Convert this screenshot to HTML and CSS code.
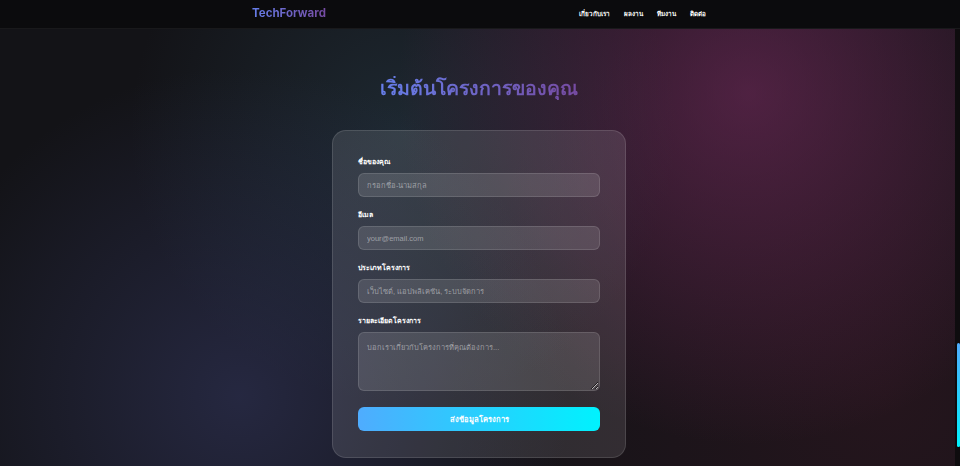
FILE: index.html
```html
<!DOCTYPE html>
<html lang="th">
<head>
<meta charset="UTF-8">
<link rel="stylesheet" href="styles.css">
</head>
<body>

<header class="navbar">
    <div class="nav-inner">
        <a class="logo" href="#">TechForward</a>
        <ul class="nav-links">
            <li><a href="#about">เกี่ยวกับเรา</a></li>
            <li><a href="#work">ผลงาน</a></li>
            <li><a href="#team">ทีมงาน</a></li>
            <li><a href="#contact">ติดต่อ</a></li>
        </ul>
    </div>
</header>

<section class="contact" id="contact">
    <h2 class="section-title">เริ่มต้นโครงการของคุณ</h2>

    <form class="contact-card" onsubmit="return false">
        <div class="field">
            <label for="name">ชื่อของคุณ</label>
            <input type="text" id="name" placeholder="กรอกชื่อ-นามสกุล">
        </div>
        <div class="field">
            <label for="email">อีเมล</label>
            <input type="email" id="email" placeholder="your@email.com">
        </div>
        <div class="field">
            <label for="type">ประเภทโครงการ</label>
            <input type="text" id="type" placeholder="เว็บไซต์, แอปพลิเคชัน, ระบบจัดการ">
        </div>
        <div class="field">
            <label for="details">รายละเอียดโครงการ</label>
            <textarea id="details" placeholder="บอกเราเกี่ยวกับโครงการที่คุณต้องการ..."></textarea>
        </div>
        <button type="submit" class="submit-btn">ส่งข้อมูลโครงการ</button>
    </form>
</section>

<!-- custom scroll indicator -->
<div class="scroll-track">
    <div class="scroll-thumb"></div>
</div>

</body>
</html>
```

FILE: styles.css
```css
* { margin: 0; padding: 0; box-sizing: border-box; }

body {
    height: 466px;
    overflow: hidden;
    font-family: "Inter", "Noto Sans", sans-serif;
    color: #fff;
    background:
        radial-gradient(circle at 78% 20%, rgba(125, 45, 100, 0.55), transparent 42%),
        radial-gradient(circle at 25% 85%, rgba(60, 65, 115, 0.45), transparent 40%),
        radial-gradient(circle at 42% 28%, rgba(45, 72, 88, 0.4), transparent 42%),
        radial-gradient(circle at 92% 85%, rgba(70, 25, 40, 0.35), transparent 45%),
        #131317;
}

.navbar {
    height: 29px;
    background: #0b0b0d;
    border-bottom: 1px solid rgba(255,255,255,0.06);
}

.nav-inner {
    width: 456px;
    height: 100%;
    margin: 0 auto;
    display: flex;
    align-items: center;
    justify-content: space-between;
}

.logo {
    font-size: 11.5px;
    line-height: 1;
    font-weight: 700;
    text-decoration: none;
    background: linear-gradient(90deg, #667eea, #764ba2);
    -webkit-background-clip: text;
    background-clip: text;
    color: transparent;
}

.nav-links {
    list-style: none;
    display: flex;
    align-items: center;
    gap: 14px;
    padding-right: 2px;
}

.nav-links a {
    display: block;
    color: #fff;
    font-size: 6.3px;
    line-height: 10px;
    font-weight: 700;
    text-decoration: none;
}

.contact {
    padding-top: 47px;
    padding-right: 2px;
}

.section-title {
    font-size: 19.5px;
    line-height: 24px;
    font-weight: 700;
    width: fit-content;
    margin: 0 auto 30px;
    background: linear-gradient(90deg, #667eea, #764ba2);
    -webkit-background-clip: text;
    background-clip: text;
    color: transparent;
}

.contact-card {
    width: 294px;
    margin: 0 auto;
    padding: 26px 25px;
    border-radius: 14px;
    background: rgba(255,255,255,0.11);
    border: 1px solid rgba(255,255,255,0.12);
}

.field { margin-bottom: 13px; }

.field label {
    display: block;
    font-size: 7px;
    line-height: 10px;
    font-weight: 700;
    margin-bottom: 6px;
}

.field input,
.field textarea {
    display: block;
    width: 100%;
    height: 24px;
    padding: 0 8px;
    border-radius: 6px;
    border: 1px solid rgba(255,255,255,0.12);
    background: rgba(255,255,255,0.12);
    color: #fff;
    font-family: "Liberation Sans", sans-serif;
    font-size: 7.5px;
    outline: none;
}

.field textarea {
    height: 59px;
    padding: 8px;
    resize: vertical;
}

.field input::placeholder,
.field textarea::placeholder {
    color: rgba(255,255,255,0.45);
}

.field:last-of-type { margin-bottom: 16px; }

.submit-btn {
    display: block;
    width: 100%;
    height: 24px;
    border: none;
    border-radius: 6px;
    background: linear-gradient(90deg, #4facfe, #00f2fe);
    color: #fff;
    font-family: "Inter", "Noto Sans", sans-serif;
    font-size: 7.5px;
    font-weight: 700;
    cursor: pointer;
}

.scroll-track {
    position: fixed;
    top: 29px;
    right: 0;
    width: 5px;
    height: calc(100% - 29px);
    background: #0e0c0e;
}

.scroll-thumb {
    position: absolute;
    top: 314px;
    right: 0;
    width: 3px;
    height: 104px;
    border-radius: 2px;
    background: linear-gradient(180deg, #4facfe, #00f2fe);
}
```
